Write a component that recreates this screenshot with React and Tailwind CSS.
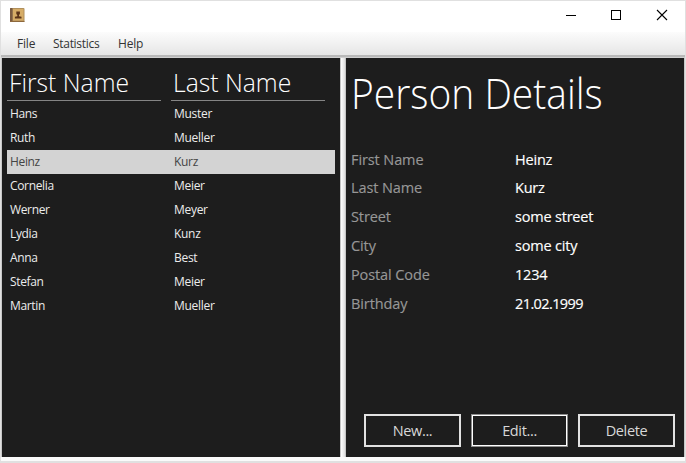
import React from "react";

const people = [
  ["Hans", "Muster"],
  ["Ruth", "Mueller"],
  ["Heinz", "Kurz"],
  ["Cornelia", "Meier"],
  ["Werner", "Meyer"],
  ["Lydia", "Kunz"],
  ["Anna", "Best"],
  ["Stefan", "Meier"],
  ["Martin", "Mueller"],
];

const details = [
  ["First Name", "Heinz"],
  ["Last Name", "Kurz"],
  ["Street", "some street"],
  ["City", "some city"],
  ["Postal Code", "1234"],
  ["Birthday", "21.02.1999"],
];

function TitleBar() {
  return (
    <header className="flex h-[31px] items-start bg-white">
      <svg className="mt-[7px] ml-[9px]" width="15" height="15" viewBox="0 0 15 15">
        <rect x="0" y="0" width="14.500" height="14" rx="1" fill="#b08f5c" />
        <rect x="3" y="1" width="10.500" height="11.500" fill="#d6ac66" />
        <rect x="0" y="0" width="2.500" height="14" rx="0.6" fill="#7a5a40" />
        <path d="M0 13h14.500v1H0z" fill="#8d683d" />
        <path d="M6.300 3.500h3.600v2.400L9 7v1.200l2.500.6v1.700H4.900V8.800l2.400-.6V7l-1-1.100z" fill="#5b3318" />
      </svg>
      <svg className="mt-[8px] ml-auto mr-[17px]" width="103" height="13" viewBox="0 0 103 13" fill="none" stroke="#000">
        <path d="M1 6.5h10" shapeRendering="crispEdges" />
        <path d="M46.500 1.500h9v9h-9z" shapeRendering="crispEdges" />
        <path d="M92 1l10 10M102 1L92 11" strokeWidth="1.1" />
      </svg>
    </header>
  );
}

function MenuBar() {
  return (
    <nav className="flex h-[23px] items-center bg-linear-to-b from-[#fcfcfc] to-[#e6e6e6] pl-4 text-[12px] text-[#333]">
      <span className="w-9 tracking-[-0.2px]">File</span>
      <span className="w-[65px] tracking-[-0.3px]">Statistics</span>
      <span className="tracking-[-0.2px]">Help</span>
    </nav>
  );
}

function PersonTable() {
  return (
    <section className="w-[338px] bg-[#1d1d1d] px-[5px] text-[12px] text-[#ececec]">
      <div className="flex h-[43px] gap-[10px] text-[26px] leading-[49px] font-light text-white">
        <div className="w-[154px] border-b border-[#858585] pl-[2px] whitespace-nowrap">
          <span className="inline-block origin-left scale-x-[0.95]">First Name</span>
        </div>
        <div className="w-[154px] border-b border-[#858585] pl-[2px] whitespace-nowrap">
          <span className="inline-block origin-left scale-x-[0.95]">Last Name</span>
        </div>
      </div>
      <div className="pt-px">
        {people.map(([first, last]) => (
          <div
            key={first}
            className={
              first === "Heinz"
                ? "flex h-6 items-center bg-[#d3d3d3] pl-[3px] text-[#444]"
                : "flex h-6 items-center pl-[3px]"
            }
          >
            <span className="w-[164px] tracking-[-0.35px]">{first}</span>
            <span className="tracking-[-0.3px]">{last}</span>
          </div>
        ))}
      </div>
    </section>
  );
}

function PersonDetails() {
  return (
    <section className="flex w-[338px] flex-col bg-[#1d1d1d] pl-[5px]">
      <h1 className="h-[87px] text-[42px] leading-[69px] font-light whitespace-nowrap text-white">
        <span className="inline-block origin-left scale-x-[0.927]">Person Details</span>
      </h1>
      <dl className="text-[14.5px] [-webkit-text-stroke:0.15px]">
        {details.map(([label, value]) => (
          <div key={label} className="flex h-[28.8px] items-center">
            <dt className="w-[164px] tracking-[-0.1px] text-[#979797]">{label}</dt>
            <dd className={value === "21.02.1999" ? "tracking-[-0.6px] text-white" : "tracking-[-0.2px] text-white"}>
              {value}
            </dd>
          </div>
        ))}
      </dl>
      <div className="mt-auto mr-[9px] mb-[10px] flex justify-end gap-[10px] text-[14.5px] tracking-[-0.35px] text-[#d8d8d8]">
        <button className="h-[33px] w-[97px] border-2 border-[#e2e2e2]">New...</button>
        <button className="h-[33px] w-[97px] border border-[#8c8c8c]">
          <span className="flex h-full items-center justify-center border border-white">Edit...</span>
        </button>
        <button className="h-[33px] w-[97px] border-2 border-[#e2e2e2]">Delete</button>
      </div>
    </section>
  );
}

export default function App() {
  return (
    <div className="h-[463px] w-[686px] overflow-hidden border border-b-2 border-[#e0e0e0] bg-white font-['Open_Sans','Noto_Sans',sans-serif]">
      <TitleBar />
      <MenuBar />
      <div className="h-[3px] border-t-2 border-[#b9b9b9] bg-[#d0d0d0]" />
      <main className="flex h-[399px] border-x border-[#c8c8c8]">
        <PersonTable />
        <div className="w-[6px] border-x border-[#c4c4c4] bg-linear-to-r from-white to-[#dedede]" />
        <PersonDetails />
      </main>
      <div className="h-1 bg-[#fafafa]" />
    </div>
  );
}
